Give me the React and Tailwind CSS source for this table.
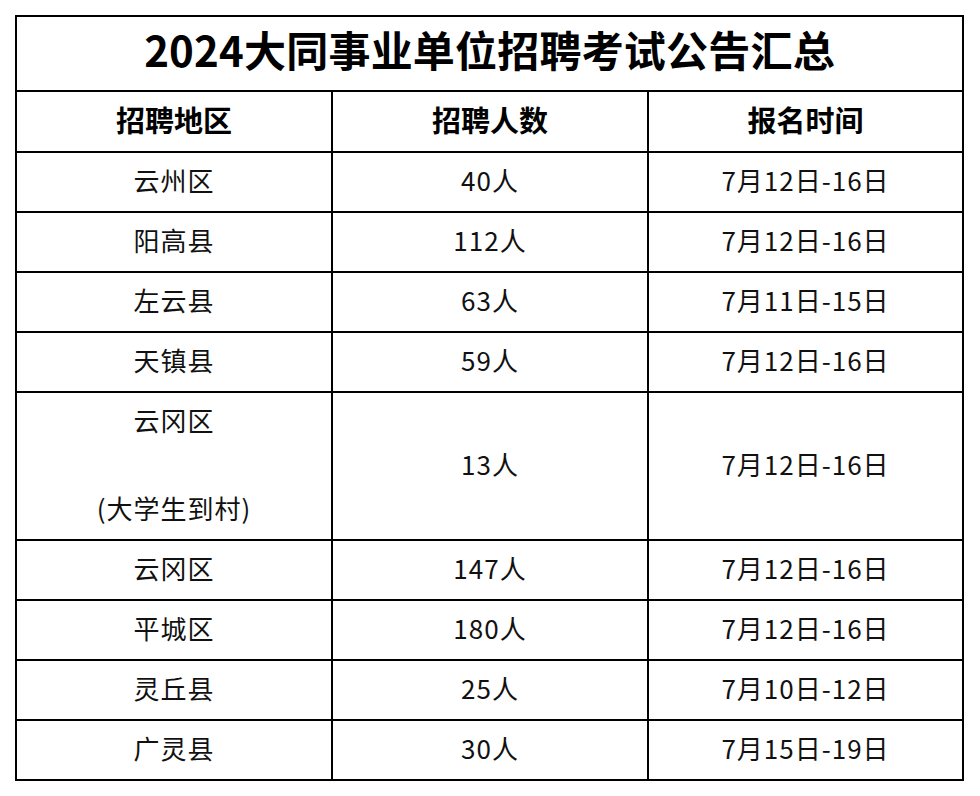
const rows = [
  { area: "云州区", count: "40人", date: "7月12日-16日" },
  { area: "阳高县", count: "112人", date: "7月12日-16日" },
  { area: "左云县", count: "63人", date: "7月11日-15日" },
  { area: "天镇县", count: "59人", date: "7月12日-16日" },
  { area: "云冈区", note: "(大学生到村)", count: "13人", date: "7月12日-16日" },
  { area: "云冈区", count: "147人", date: "7月12日-16日" },
  { area: "平城区", count: "180人", date: "7月12日-16日" },
  { area: "灵丘县", count: "25人", date: "7月10日-12日" },
  { area: "广灵县", count: "30人", date: "7月15日-19日" },
];

const font = { fontFamily: '"Noto Sans CJK SC", "Noto Sans", sans-serif' };

function Cell({ children, tall }) {
  return (
    <div
      className={
        "border-r-2 border-b-2 border-black flex items-center justify-center pb-[5px] text-[26px] tracking-[1px] text-[#111] " +
        (tall ? "h-[148px]" : "h-[60px]")
      }
    >
      {children}
    </div>
  );
}

export default function App() {
  return (
    <div className="w-[980px] h-[796px] bg-white pt-[15px] pl-[15px]" style={font}>
      <div className="w-fit border-l-2 border-t-2 border-black">
        {/* Title */}
        <div className="w-[947px] h-[75px] border-r-2 border-b-2 border-black flex items-center justify-center">
          <h1 className="text-[42px] font-bold text-black leading-none tracking-[0.2px] -mt-[9px]">
            2024大同事业单位招聘考试公告汇总
          </h1>
        </div>

        <div className="grid grid-cols-[316px_316px_315px]">
          {/* Header */}
          {["招聘地区", "招聘人数", "报名时间"].map((h) => (
            <div
              key={h}
              className="h-[61px] border-r-2 border-b-2 border-black flex items-center justify-center pb-[4px] text-[29px] font-bold text-black"
            >
              {h}
            </div>
          ))}

          {/* Rows */}
          {rows.map((r, i) => (
            <div key={i} className="contents">
              {r.note ? (
                <div className="h-[148px] border-r-2 border-b-2 border-black flex flex-col items-center justify-between pt-[9px] pb-[13px] text-[26px] tracking-[1px] text-[#111] leading-[36px]">
                  <span>{r.area}</span>
                  <span>{r.note}</span>
                </div>
              ) : (
                <Cell>{r.area}</Cell>
              )}
              <Cell tall={!!r.note}>{r.count}</Cell>
              <Cell tall={!!r.note}>{r.date}</Cell>
            </div>
          ))}
        </div>
      </div>
    </div>
  );
}
